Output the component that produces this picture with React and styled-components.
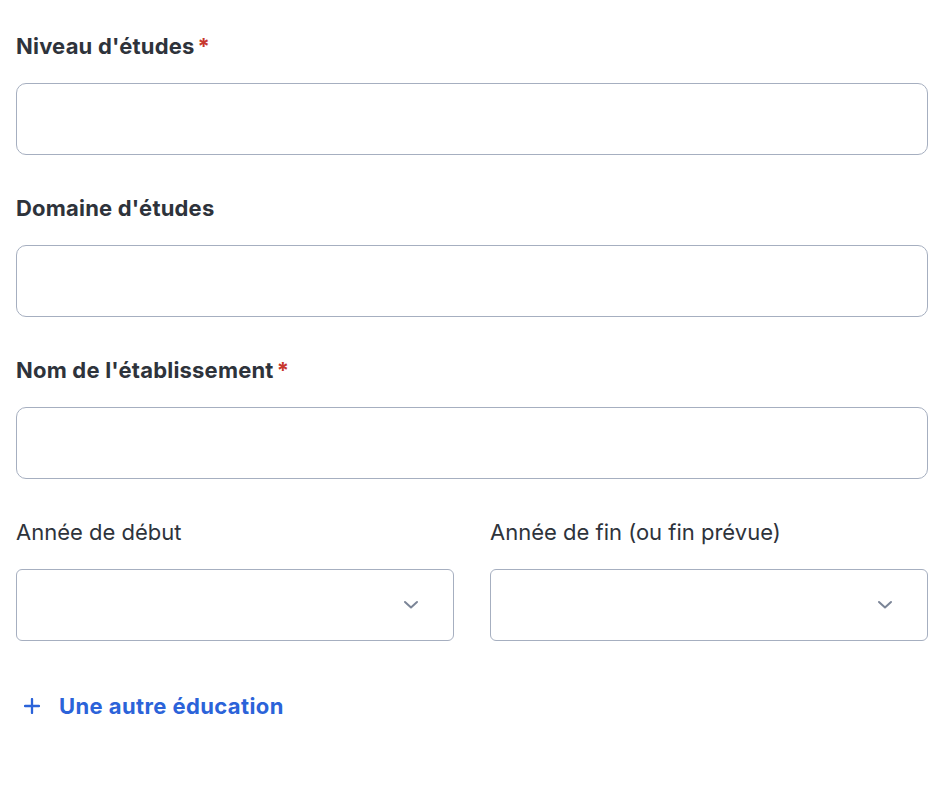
import React from 'react';
import styled, { createGlobalStyle } from 'styled-components';

const GlobalStyle = createGlobalStyle`
  body {
    margin: 0;
    background: #ffffff;
    font-family: Inter, "Noto Sans", sans-serif;
  }
`;

const Form = styled.form`
  padding: 34px 14px 40px 16px;
  display: flex;
  flex-direction: column;
  gap: 41px;
`;

const Field = styled.div`
  display: flex;
  flex-direction: column;
  gap: 25px;
  flex: 1;
`;

const Label = styled.label`
  font-size: 22px;
  line-height: 24px;
  font-weight: ${({ bold }) => (bold ? 700 : 400)};
  letter-spacing: ${({ bold }) => (bold ? '0.2px' : '0')};
  color: #2e333b;

  .required {
    color: #c8372d;
    margin-left: 3px;
  }
`;

const TextInput = styled.input`
  box-sizing: border-box;
  height: 72px;
  width: 100%;
  border: 1px solid #a6afc0;
  border-radius: 10px;
  padding: 0 20px;
  font-size: 18px;
  font-family: inherit;
  outline: none;
`;

const Row = styled.div`
  display: flex;
  gap: 36px;
`;

const SelectBox = styled.div`
  box-sizing: border-box;
  height: 72px;
  border: 1px solid #a6afc0;
  border-radius: 6px;
  display: flex;
  align-items: center;
  justify-content: flex-end;
  padding-right: 34px;
`;

const AddLink = styled.button`
  display: flex;
  align-items: center;
  gap: 19px;
  background: none;
  border: none;
  padding: 0 0 0 8px;
  margin-top: 10px;
  font-family: inherit;
  font-size: 22px;
  line-height: 28px;
  font-weight: 700;
  letter-spacing: 0.4px;
  color: #2b63d9;
  cursor: pointer;
`;

const Chevron = () => (
  <svg width="16" height="16" viewBox="0 0 16 16" fill="none">
    <path d="M2 5 L8 10.5 L14 5" stroke="#7b8597" strokeWidth="2" strokeLinecap="round" strokeLinejoin="round" />
  </svg>
);

const Plus = () => (
  <svg width="16" height="16" viewBox="0 0 16 16" fill="none">
    <path d="M8 1 V15 M1 8 H15" stroke="#2b63d9" strokeWidth="2.3" strokeLinecap="round" />
  </svg>
);

const App = () => (
  <>
    <GlobalStyle />
    <Form onSubmit={(e) => e.preventDefault()}>
      <Field>
        <Label bold>
          Niveau d'études<span className="required">*</span>
        </Label>
        <TextInput type="text" />
      </Field>
      <Field>
        <Label bold>Domaine d'études</Label>
        <TextInput type="text" />
      </Field>
      <Field>
        <Label bold>
          Nom de l'établissement<span className="required">*</span>
        </Label>
        <TextInput type="text" />
      </Field>
      <Row>
        <Field>
          <Label>Année de début</Label>
          <SelectBox>
            <Chevron />
          </SelectBox>
        </Field>
        <Field>
          <Label>Année de fin (ou fin prévue)</Label>
          <SelectBox>
            <Chevron />
          </SelectBox>
        </Field>
      </Row>
      <AddLink type="button">
        <Plus />
        Une autre éducation
      </AddLink>
    </Form>
  </>
);

export default App;
